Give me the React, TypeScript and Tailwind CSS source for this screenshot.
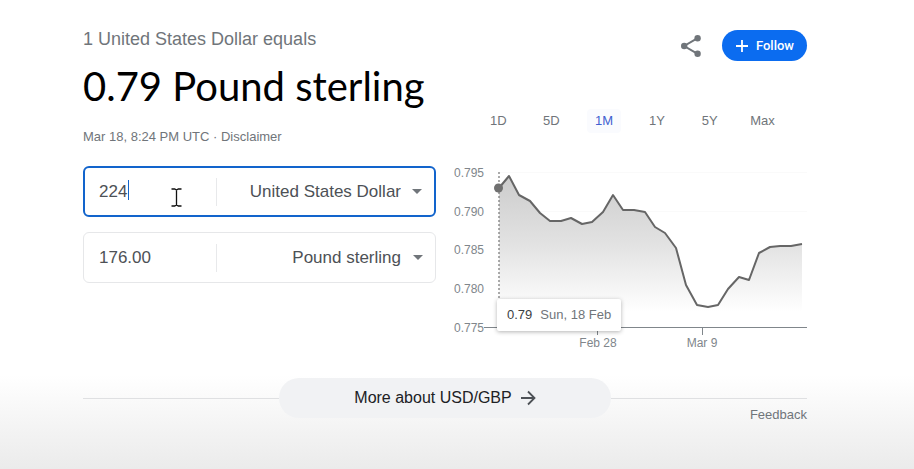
import { useState } from "react";

const RANGES = ["1D", "5D", "1M", "1Y", "5Y", "Max"];
const CURRENCIES = ["United States Dollar", "Pound sterling"];

const POINTS: [number, number][] = [
  [45, 28], [55, 16], [65, 35], [76, 41], [86, 53], [96, 61], [107, 61], [117, 58],
  [128, 64], [138, 62], [149, 52], [159, 35], [169, 50], [180, 50], [191, 52],
  [201, 67], [211, 73], [222, 88], [232, 125], [243, 145], [254, 147], [264, 145],
  [274, 129], [285, 117], [295, 120], [305, 93], [316, 87], [326, 86], [337, 86], [348, 84],
];

const Y_LABELS = [
  { label: "0.795", y: 13 },
  { label: "0.790", y: 52 },
  { label: "0.785", y: 90 },
  { label: "0.780", y: 129 },
  { label: "0.775", y: 168 },
];

function ShareIcon() {
  return (
    <svg viewBox="0 0 24 24" className="size-6" fill="#70757a" stroke="#70757a">
      <path d="M18.6 4.2 5.2 12l13.4 7.8" fill="none" strokeWidth="2" />
      <circle cx="18.6" cy="4.2" r="3.2" stroke="none" />
      <circle cx="5.2" cy="12" r="3.2" stroke="none" />
      <circle cx="18.6" cy="19.8" r="3.2" stroke="none" />
    </svg>
  );
}

interface CurrencyRowProps {
  name: string;
  amount: string;
  currency: string;
  active?: boolean;
}

function CurrencyRow({ name, amount, currency, active = false }: CurrencyRowProps) {
  const [value, setValue] = useState(amount);
  const [unit, setUnit] = useState(currency);

  return (
    <div
      className={
        active
          ? "relative flex h-[51px] items-center rounded-md border-2 border-[#1264cc] bg-white"
          : "relative flex h-[51px] items-center rounded-md border border-[#e6e7e9] bg-white px-px"
      }
    >
      <input
        type="text"
        aria-label={`${name} amount`}
        value={value}
        onChange={(e) => setValue(e.target.value)}
        className="h-7 w-[132px] border-r border-[#e8e9eb] bg-transparent pl-[14px] text-[17px] text-[#4d5156] outline-none"
      />
      {active && (
        <>
          {/* Text caret */}
          <span className="absolute top-3 left-[43px] h-5 w-px bg-[#1264cc]" />
          {/* Mouse pointer */}
          <svg viewBox="0 0 11 19" className="absolute top-5 left-[86px] h-[19px] w-[11px]" fill="none" stroke="#111">
            <path d="M.5 1h3.2L5.5 2l1.8-1h3.2M5.5 2v15M.5 18h3.2l1.8-1 1.8 1h3.2" strokeWidth="1.3" />
          </svg>
        </>
      )}
      <select
        aria-label={`${name} currency`}
        value={unit}
        onChange={(e) => setUnit(e.target.value)}
        className="h-full min-w-0 flex-1 appearance-none bg-transparent pr-[33px] text-[17px] text-[#4d5156] outline-none [text-align-last:right]"
      >
        {CURRENCIES.map((c) => (
          <option key={c}>{c}</option>
        ))}
      </select>
      <svg viewBox="0 0 10 5" className="pointer-events-none absolute right-3 h-[5px] w-[10px]" fill="#70757a">
        <path d="M0 0h10L5 5z" />
      </svg>
    </div>
  );
}

function RateChart() {
  const line = POINTS.map(([x, y]) => `${x},${y}`).join(" ");

  return (
    <div className="relative mt-[27px]">
      <svg viewBox="0 0 353 192" className="block w-full" fontSize="12" fill="#80868b">
        <defs>
          <linearGradient id="area" gradientUnits="userSpaceOnUse" x1="0" y1="16" x2="0" y2="152">
            <stop offset="0" stopColor="#cccccc" />
            <stop offset="0.5" stopColor="#e2e2e2" />
            <stop offset="1" stopColor="#ffffff" />
          </linearGradient>
        </defs>
        <path d="M45 12.5H353M45 51.5H353" stroke="#fafafa" />
        <polygon points={`45,152 ${line} 348,152`} fill="url(#area)" />
        <path d="M30 167.5H353M143.5 168v7M248.5 168v7" stroke="#80868b" />
        <path d="M45 12v140" stroke="#757575" strokeDasharray="2 2" strokeWidth="1.2" />
        <polyline points={line} fill="none" stroke="#666666" strokeWidth="2" strokeLinejoin="round" />
        <circle cx="44.5" cy="28" r="4.5" fill="#707070" />
        {Y_LABELS.map(({ label, y }) => (
          <text key={label} x="0" y={y + 4}>{label}</text>
        ))}
        <text x="144" y="187" textAnchor="middle">Feb 28</text>
        <text x="248" y="187" textAnchor="middle">Mar 9</text>
      </svg>
      {/* Tooltip for the first point */}
      <div className="absolute top-[139px] left-[43px] flex h-8 items-center gap-2 rounded-xs bg-white px-[10px] text-[13px] whitespace-nowrap shadow-[0_1px_4px_rgba(0,0,0,0.3)]">
        <span className="text-[#3c4043]">0.79</span>
        <span className="text-[#70757a]">Sun, 18 Feb</span>
      </div>
    </div>
  );
}

export default function App() {
  const [range, setRange] = useState("1M");

  return (
    <main className="min-h-screen bg-linear-to-b from-white from-80% to-[#ebebeb] pt-7 pr-[107px] pl-[83px] font-['Liberation_Sans',Arial,sans-serif]">
      <div className="grid grid-cols-2 gap-[18px]">
        <section>
          <p className="text-[18px] leading-[22px] text-[#70757a]">1 United States Dollar equals</p>
          <h1 className="mt-3 font-[Lato,sans-serif] text-[40px] leading-[48px] whitespace-nowrap text-black">
            0.79 Pound sterling
          </h1>
          <p className="mt-[19px] text-[13px] leading-4 text-[#70757a]">
            Mar 18, 8:24 PM UTC · <a href="#disclaimer">Disclaimer</a>
          </p>
          <div className="mt-[21px] flex flex-col gap-[15px]">
            <CurrencyRow name="From" amount="224" currency="United States Dollar" active />
            <CurrencyRow name="To" amount="176.00" currency="Pound sterling" />
          </div>
        </section>

        <section className="pt-0.5">
          <div className="flex items-center justify-end gap-[19px]">
            <button type="button" aria-label="Share">
              <ShareIcon />
            </button>
            <button
              type="button"
              className="flex h-[31px] items-center gap-[7px] rounded-full bg-[#0b6cf0] px-[13px] font-[Roboto,sans-serif] text-[13px] font-medium text-white"
            >
              <svg viewBox="0 0 14 14" className="size-[14px]" fill="none" stroke="currentColor" strokeWidth="1.8">
                <path d="M7 1v12M1 7h12" />
              </svg>
              Follow
            </button>
          </div>
          <div className="mt-12 grid grid-cols-6 justify-items-center px-[18px]">
            {RANGES.map((r) => (
              <button
                key={r}
                type="button"
                onClick={() => setRange(r)}
                className={
                  r === range
                    ? "h-6 rounded-sm bg-[#fafbfe] px-2 text-[13px] text-[#3f5fd0]"
                    : "h-6 px-2 text-[13px] text-[#70757a]"
                }
              >
                {r}
              </button>
            ))}
          </div>
          <RateChart />
        </section>
      </div>

      <div className="mt-[26px] flex items-center">
        <hr className="flex-1 border-[#dfe0e2]" />
        <a
          href="#more"
          className="flex h-10 w-[332px] items-center justify-center gap-2 rounded-full bg-[#f1f2f4] text-[16px] text-[#202124]"
        >
          More about USD/GBP
          <svg viewBox="0 0 16 16" className="size-4" fill="none" stroke="#4d5156" strokeWidth="1.8">
            <path d="M1 8h13.5M8 1.5 14.5 8 8 14.5" />
          </svg>
        </a>
        <hr className="flex-1 border-[#dfe0e2]" />
      </div>
      <div className="-mt-[11px] flex justify-end">
        <a href="#feedback" className="text-[13px] leading-4 text-[#70757a]">Feedback</a>
      </div>
    </main>
  );
}
